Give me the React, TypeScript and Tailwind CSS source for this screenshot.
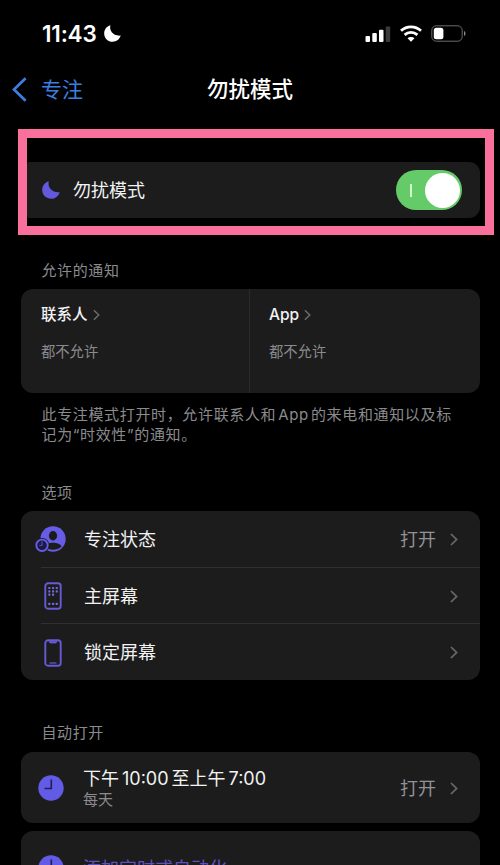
import { useState } from "react";
import type { ReactNode } from "react";

// --- Types ---
interface OptionItem {
  label: string;
  value?: string;
  icon: ReactNode;
}

// --- Icons ---
function Chevron({ className }: { className: string }) {
  return (
    <svg className={className} viewBox="0 0 8 13" fill="none" stroke="currentColor" strokeWidth="1.7">
      <path d="M1 1l5.600 5.500L1 12" />
    </svg>
  );
}

function BackChevron() {
  return (
    <svg className="h-[25px] w-[15px]" viewBox="0 0 15 25" fill="none" stroke="currentColor" strokeWidth="2.700">
      <path d="M13.600 1.200L2 12.500l11.600 11.300" />
    </svg>
  );
}

function Moon({ className }: { className: string }) {
  return (
    <svg className={className} viewBox="0 0 18 18" fill="currentColor">
      <path d="M6.800.3C5.300 5.600 9.300 11.900 17.700 11.200 16.500 15.200 13.200 17.800 9.200 17.800 4.200 17.800.2 13.900.2 9 .2 4.900 2.700 1.600 6.800.3z" />
    </svg>
  );
}

function SignalIcon() {
  return (
    <svg className="h-4 w-[26px]" viewBox="0 0 26 16" fill="#fff">
      <rect x="0.500" y="10" width="4.500" height="6" rx="1" />
      <rect x="7.300" y="7" width="4.500" height="9" rx="1" />
      <rect x="14" y="3.800" width="4.500" height="12.200" rx="1" />
      <rect x="20.700" y="0.500" width="4.500" height="15.500" rx="1" fill="#3a3a3a" />
    </svg>
  );
}

function WifiIcon() {
  return (
    <svg className="h-[17px] w-[22px]" viewBox="0 0 22 17" fill="none" stroke="#fff" strokeWidth="2.800">
      <path d="M1 5.800C6.600 .6 15.400 .6 21 5.800" />
      <path d="M4.600 9.900c3.700-3.300 9.100-3.300 12.800 0" />
      <path d="M11 16.800L7.500 13.300c1.900-1.900 5.100-1.900 7 0z" fill="#fff" stroke="none" />
    </svg>
  );
}

function BatteryIcon() {
  return (
    <svg className="h-[17px] w-[36px]" viewBox="0 0 36 17">
      <rect x="0.800" y="0.800" width="30.400" height="15.400" rx="4.500" fill="none" stroke="#6c6c6c" strokeWidth="1" />
      <rect x="2.800" y="2.800" width="9.600" height="11.400" rx="2.500" fill="#fff" />
      <path d="M33 6c2 .8 2 4.200 0 5z" fill="#888" />
    </svg>
  );
}

function FocusStatusIcon() {
  return (
    <svg className="h-[27px] w-[31px]" viewBox="0 0 31 27">
      <circle cx="18" cy="13" r="12.700" fill="#665ce6" />
      <ellipse cx="18" cy="9.700" rx="4.100" ry="4.700" fill="#1c1c1d" />
      <path d="M9.500 20.500c2-5 15-5 17 0-4.500 4.400-12.500 4.400-17 0z" fill="#1c1c1d" />
      <circle cx="7" cy="19.300" r="7.400" fill="#1c1c1d" />
      <circle cx="7" cy="19.300" r="5.700" fill="#1c1a45" stroke="#665ce6" strokeWidth="1.900" />
      <path d="M7 15.500v4H4.200" fill="none" stroke="#5048b8" strokeWidth="1.200" />
    </svg>
  );
}

function HomeScreenIcon() {
  const rows = [6, 9.3, 12.6, 21.8];
  return (
    <svg className="h-[28px] w-[18px]" viewBox="0 0 18 28" fill="none">
      <rect x="1.300" y="1.300" width="15.400" height="25.400" rx="2.800" stroke="#665ad5" strokeWidth="1.900" />
      {rows.map((y, i) => (
        <g key={y} fill="#7169d8">
          <rect x="4.300" y={y - 1} width="2.100" height="2.100" rx="0.500" />
          <rect x="8" y={y - 1} width="2.100" height="2.100" rx="0.500" />
          {i !== 2 && <rect x="11.700" y={y - 1} width="2.100" height="2.100" rx="0.500" />}
        </g>
      ))}
    </svg>
  );
}

function LockScreenIcon() {
  return (
    <svg className="h-[28px] w-[18px]" viewBox="0 0 18 28" fill="none" stroke="#665ad5">
      <rect x="1.300" y="1.300" width="15.400" height="25.400" rx="2.800" strokeWidth="1.900" />
      <path d="M5 2.200l1 1.800h6l1-1.800z" fill="#665ad5" strokeWidth="0.800" />
      <path d="M5.500 24h7" strokeWidth="1.200" />
    </svg>
  );
}

function ClockIcon() {
  return (
    <svg className="size-[26px]" viewBox="0 0 26 26">
      <circle cx="13" cy="13" r="12.700" fill="#625be5" />
      <path d="M13.300 4.500v9H6.500" fill="none" stroke="#211e55" strokeWidth="1.600" />
    </svg>
  );
}

// --- Data ---
const OPTIONS: OptionItem[] = [
  { label: "专注状态", value: "打开", icon: <FocusStatusIcon /> },
  { label: "主屏幕", icon: <HomeScreenIcon /> },
  { label: "锁定屏幕", icon: <LockScreenIcon /> },
];

const ALLOWED = ["联系人", "App"];

function SectionLabel({ children }: { children: ReactNode }) {
  return (
    <h2 className="flex h-9 items-center pt-px pl-[41.5px] text-[15px] tracking-[0.6px] text-[#8b8b8e]">
      {children}
    </h2>
  );
}

// --- Component ---
export default function App() {
  const [enabled, setEnabled] = useState(true);

  return (
    <div className="h-[865px] w-[500px] overflow-hidden bg-black font-[Inter,'Noto_Sans_CJK_SC',sans-serif] text-[#f2f2f2]">
      {/* Status bar */}
      <div className="flex h-[67px] items-center justify-between pr-[33px] pl-[42px]">
        <div className="flex items-center gap-[7px]">
          <span className="text-[22.5px] font-semibold tracking-[-0.2px] text-white">11:43</span>
          <Moon className="size-[17px] text-white" />
        </div>
        <div className="flex items-center gap-[9px]">
          <SignalIcon />
          <WifiIcon />
          <BatteryIcon />
        </div>
      </div>

      {/* Nav bar */}
      <div className="grid h-[45px] grid-cols-3 items-center">
        <button className="flex items-center gap-[14px] pl-3 text-[21px] text-[#3d7fe0]">
          <BackChevron />
          专注
        </button>
        <h1 className="text-center text-[21.5px] font-medium text-white">勿扰模式</h1>
      </div>

      {/* Main switch */}
      <div className="mt-[17px] ml-[18px] h-[106px] w-[476px] border-[9px] border-[#f9709c] pt-6 pr-[5px]">
        <div className="flex h-14 items-center rounded-r-[11px] rounded-l-[2px] bg-[#1c1c1d] pr-[18px] pl-[15px]">
          <Moon className="size-[18px] text-[#625ada]" />
          <span className="ml-[13px] flex-1 pt-px text-[18px]">勿扰模式</span>
          <button
            onClick={() => setEnabled((v) => !v)}
            className={
              enabled
                ? "flex h-10 w-[66px] items-center justify-between rounded-full bg-[#65cb69] pr-[2px] pl-[14px]"
                : "flex h-10 w-[66px] flex-row-reverse items-center justify-between rounded-full bg-[#39393d] pr-[14px] pl-[2px]"
            }
          >
            <span className="h-[13px] w-[1.5px] bg-[#d5f5d5]" />
            <span className="size-[35px] rounded-full bg-white" />
          </button>
        </div>
      </div>

      {/* Allowed notifications */}
      <div className="mt-[18px]">
        <SectionLabel>允许的通知</SectionLabel>
        <div className="mr-5 ml-[21px] grid h-[104px] grid-cols-[229px_1fr] rounded-[12px] bg-[#1c1c1d]">
          {ALLOWED.map((name, i) => (
            <div
              key={name}
              className={i === 0 ? "border-r border-[#2b2b2d] pt-[14px] pl-5" : "pt-[14px] pl-[19px]"}
            >
              <div className="flex h-6 items-center gap-[5px] text-[15.5px] font-medium">
                {name}
                <Chevron className="h-3 w-[7px] text-[#6b6b6e]" />
              </div>
              <p className="mt-[15px] text-[14.3px] leading-5 text-[#8b8b8e]">都不允许</p>
            </div>
          ))}
        </div>
        <p className="mt-[12px] pl-[41.5px] text-[15px] leading-5 tracking-[0.65px] whitespace-nowrap text-[#8b8b8e]">
          此专注模式打开时，允许联系人和<span className="mx-[2px]">App</span>的来电和通知以及标
          <br />
          记为“时效性”的通知。
        </p>
      </div>

      {/* Options */}
      <div className="mt-[30px]">
        <SectionLabel>选项</SectionLabel>
        <div className="mr-5 ml-[21px] rounded-[12px] bg-[#1c1c1d]">
          {OPTIONS.map((item, i) => (
            <div key={item.label}>
              {i > 0 && <div className="ml-5 h-[0.5px] border-t border-[#303032]" />}
              <div className="flex h-[55.7px] items-center pt-px pr-[22px] pl-[14px]">
                <div className="flex w-[35px] justify-center pr-[4px]">
                  <div className={i === 0 ? "" : "pl-[4px]"}>{item.icon}</div>
                </div>
                <span className="ml-[14px] flex-1 text-[18px]">{item.label}</span>
                {item.value && <span className="mr-[14px] text-[18px] text-[#929295]">{item.value}</span>}
                <Chevron className="h-[13px] w-2 text-[#6b6b6e]" />
              </div>
            </div>
          ))}
        </div>
      </div>

      {/* Schedules */}
      <div className="mt-[35px]">
        <SectionLabel>自动打开</SectionLabel>
        <div className="mt-px mr-5 ml-[21px] flex h-[71px] items-center rounded-[12px] bg-[#1c1c1d] pt-px pr-[22px] pl-[17px]">
          <ClockIcon />
          <div className="ml-[19px] flex-1">
            <div className="flex gap-[3px] text-[18px] leading-[22px]">
              <span>下午</span>
              <span>10:00</span>
              <span>至上午</span>
              <span>7:00</span>
            </div>
            <div className="text-[15px] leading-[19px] text-[#8b8b8e]">每天</div>
          </div>
          <span className="mr-[14px] text-[18px] text-[#929295]">打开</span>
          <Chevron className="h-[13px] w-2 text-[#6b6b6e]" />
        </div>
        <div className="mt-2 mr-5 ml-[21px] flex h-[73px] items-center rounded-[12px] bg-[#1c1c1d] pl-[17px]">
          <ClockIcon />
          <span className="ml-[19px] pt-[2px] text-[18px] text-[#5c50bd]">添加定时或自动化</span>
        </div>
      </div>
    </div>
  );
}
